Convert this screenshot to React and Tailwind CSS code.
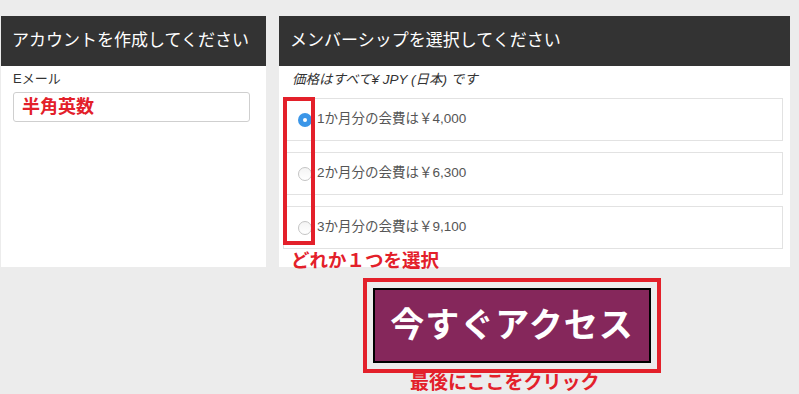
const font = { fontFamily: '"Liberation Sans", "Noto Sans CJK JP", sans-serif' }

const plans = [
  { id: 1, label: '1か月分の会費は￥4,000', checked: true },
  { id: 2, label: '2か月分の会費は￥6,300' },
  { id: 3, label: '3か月分の会費は￥9,100' },
]

function Radio({ checked }) {
  if (checked) {
    return (
      <span className="w-[14px] h-[14px] rounded-full bg-[#3b96e8] flex items-center justify-center shrink-0">
        <span className="w-[4px] h-[4px] rounded-full bg-white" />
      </span>
    )
  }
  return <span className="w-[14px] h-[14px] rounded-full border border-[#c4c4c4] bg-gradient-to-b from-[#f4f4f4] to-white shrink-0" />
}

export default function App() {
  return (
    <div className="w-[799px] h-[394px] bg-[#ececec] overflow-hidden" style={font}>
      <div className="flex gap-[13px] pt-[16px] pl-[1px]">
        {/* Account */}
        <div className="w-[265px] h-[251px] bg-white">
          <div className="h-[50px] bg-[#333333] text-white text-[17px] flex items-center px-[11px]">
            アカウントを作成してください
          </div>
          <div className="px-[12px] pt-[3px]">
            <div className="text-[13px] text-[#333] leading-[20px]">Eメール</div>
            <div className="mt-[3px] w-[237px] h-[30px] border border-[#cfcfcf] rounded-[3px] flex items-center px-[8px] text-[18px] font-bold text-[#e3202a]">
              半角英数
            </div>
          </div>
        </div>

        {/* Membership */}
        <div className="relative w-[511px] h-[251px] bg-white">
          <div className="h-[50px] bg-[#333333] text-white text-[17px] flex items-center px-[11px]">
            メンバーシップを選択してください
          </div>
          <div className="px-[4px]">
            <div className="text-[13.5px] italic text-[#333] leading-[20px] pl-[9px] pt-[4px] pb-[8px]">
              価格はすべて¥ JPY (日本) です
            </div>
            <div className="flex flex-col gap-[11px] w-[500px]">
              {plans.map((p) => (
                <div key={p.id} className="h-[43px] border border-[#e2e2e2] flex items-center gap-[5px] pl-[14px]">
                  <Radio checked={p.checked} />
                  <span className="text-[13.5px] text-[#555]">{p.label}</span>
                </div>
              ))}
            </div>
          </div>

          {/* annotation */}
          <div className="absolute left-[4px] top-[81px] w-[32px] h-[148px] border-[4px] border-[#e3202a]" />
          <div className="absolute left-[12px] top-[235px] text-[18.5px] font-bold text-[#e3202a] leading-[19px]">
            どれか１つを選択
          </div>
        </div>
      </div>

      <div className="ml-[363px] mt-[11px] w-[298px] h-[95px] border-[4px] border-[#e3202a] p-[6px]">
        <button className="w-full h-full bg-[#85275b] border-2 border-black text-white text-[34px] font-bold tracking-[1px]">
          今すぐアクセス
        </button>
      </div>
      <div className="ml-[410px] text-[19px] font-bold text-[#e3202a] leading-[19px]">
        最後にここをクリック
      </div>
    </div>
  )
}
